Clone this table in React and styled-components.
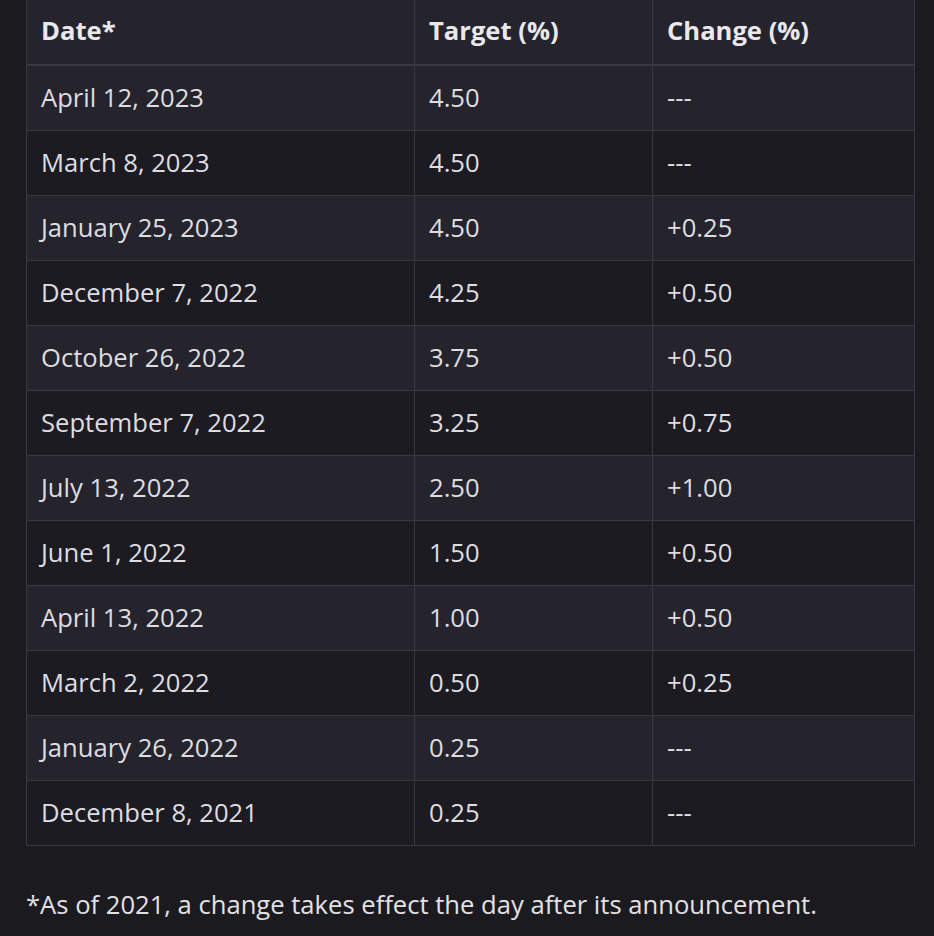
import React from 'react';
import styled, { createGlobalStyle } from 'styled-components';

const GlobalStyle = createGlobalStyle`
  html, body {
    margin: 0;
    padding: 0;
    background: #1b1a1f;
  }
`;

const Page = styled.div`
  padding: 0 21px 0 26px;
  font-family: "Open Sans", "Noto Sans", sans-serif;
  color: #dedde2;
`;

const Table = styled.table`
  width: 888px;
  margin-top: -2px;
  border-collapse: collapse;
  table-layout: fixed;
  font-size: 25.6px;
  line-height: 36px;
`;

const HeadCell = styled.th`
  text-align: left;
  font-weight: 700;
  color: #e9e8ec;
  background: #25242c;
  padding: 14px 14px 15px;
  border: 1px solid #3a3942;
  border-bottom: 2px solid #3a3942;
`;

const Row = styled.tr`
  background: ${props => (props.odd ? '#25242c' : '#1c1b21')};
`;

const Cell = styled.td`
  padding: 14px;
  border: 1px solid #3a3942;
  white-space: nowrap;
`;

const Note = styled.p`
  margin: 41px 0 0;
  font-size: 25.6px;
  line-height: 36px;
  color: #e2e1e6;
`;

const rates = [
  ['April 12, 2023', '4.50', '---'],
  ['March 8, 2023', '4.50', '---'],
  ['January 25, 2023', '4.50', '+0.25'],
  ['December 7, 2022', '4.25', '+0.50'],
  ['October 26, 2022', '3.75', '+0.50'],
  ['September 7, 2022', '3.25', '+0.75'],
  ['July 13, 2022', '2.50', '+1.00'],
  ['June 1, 2022', '1.50', '+0.50'],
  ['April 13, 2022', '1.00', '+0.50'],
  ['March 2, 2022', '0.50', '+0.25'],
  ['January 26, 2022', '0.25', '---'],
  ['December 8, 2021', '0.25', '---'],
];

const App = () => (
  <Page>
    <GlobalStyle />
    <Table>
      <colgroup>
        <col style={{ width: '388px' }} />
        <col style={{ width: '238px' }} />
        <col style={{ width: '262px' }} />
      </colgroup>
      <thead>
        <tr>
          <HeadCell>Date*</HeadCell>
          <HeadCell>Target (%)</HeadCell>
          <HeadCell>Change (%)</HeadCell>
        </tr>
      </thead>
      <tbody>
        {rates.map(([date, target, change], i) => (
          <Row key={date} odd={i % 2 === 0}>
            <Cell>{date}</Cell>
            <Cell>{target}</Cell>
            <Cell>{change}</Cell>
          </Row>
        ))}
      </tbody>
    </Table>
    <Note>*As of 2021, a change takes effect the day after its announcement.</Note>
  </Page>
);

export default App;
